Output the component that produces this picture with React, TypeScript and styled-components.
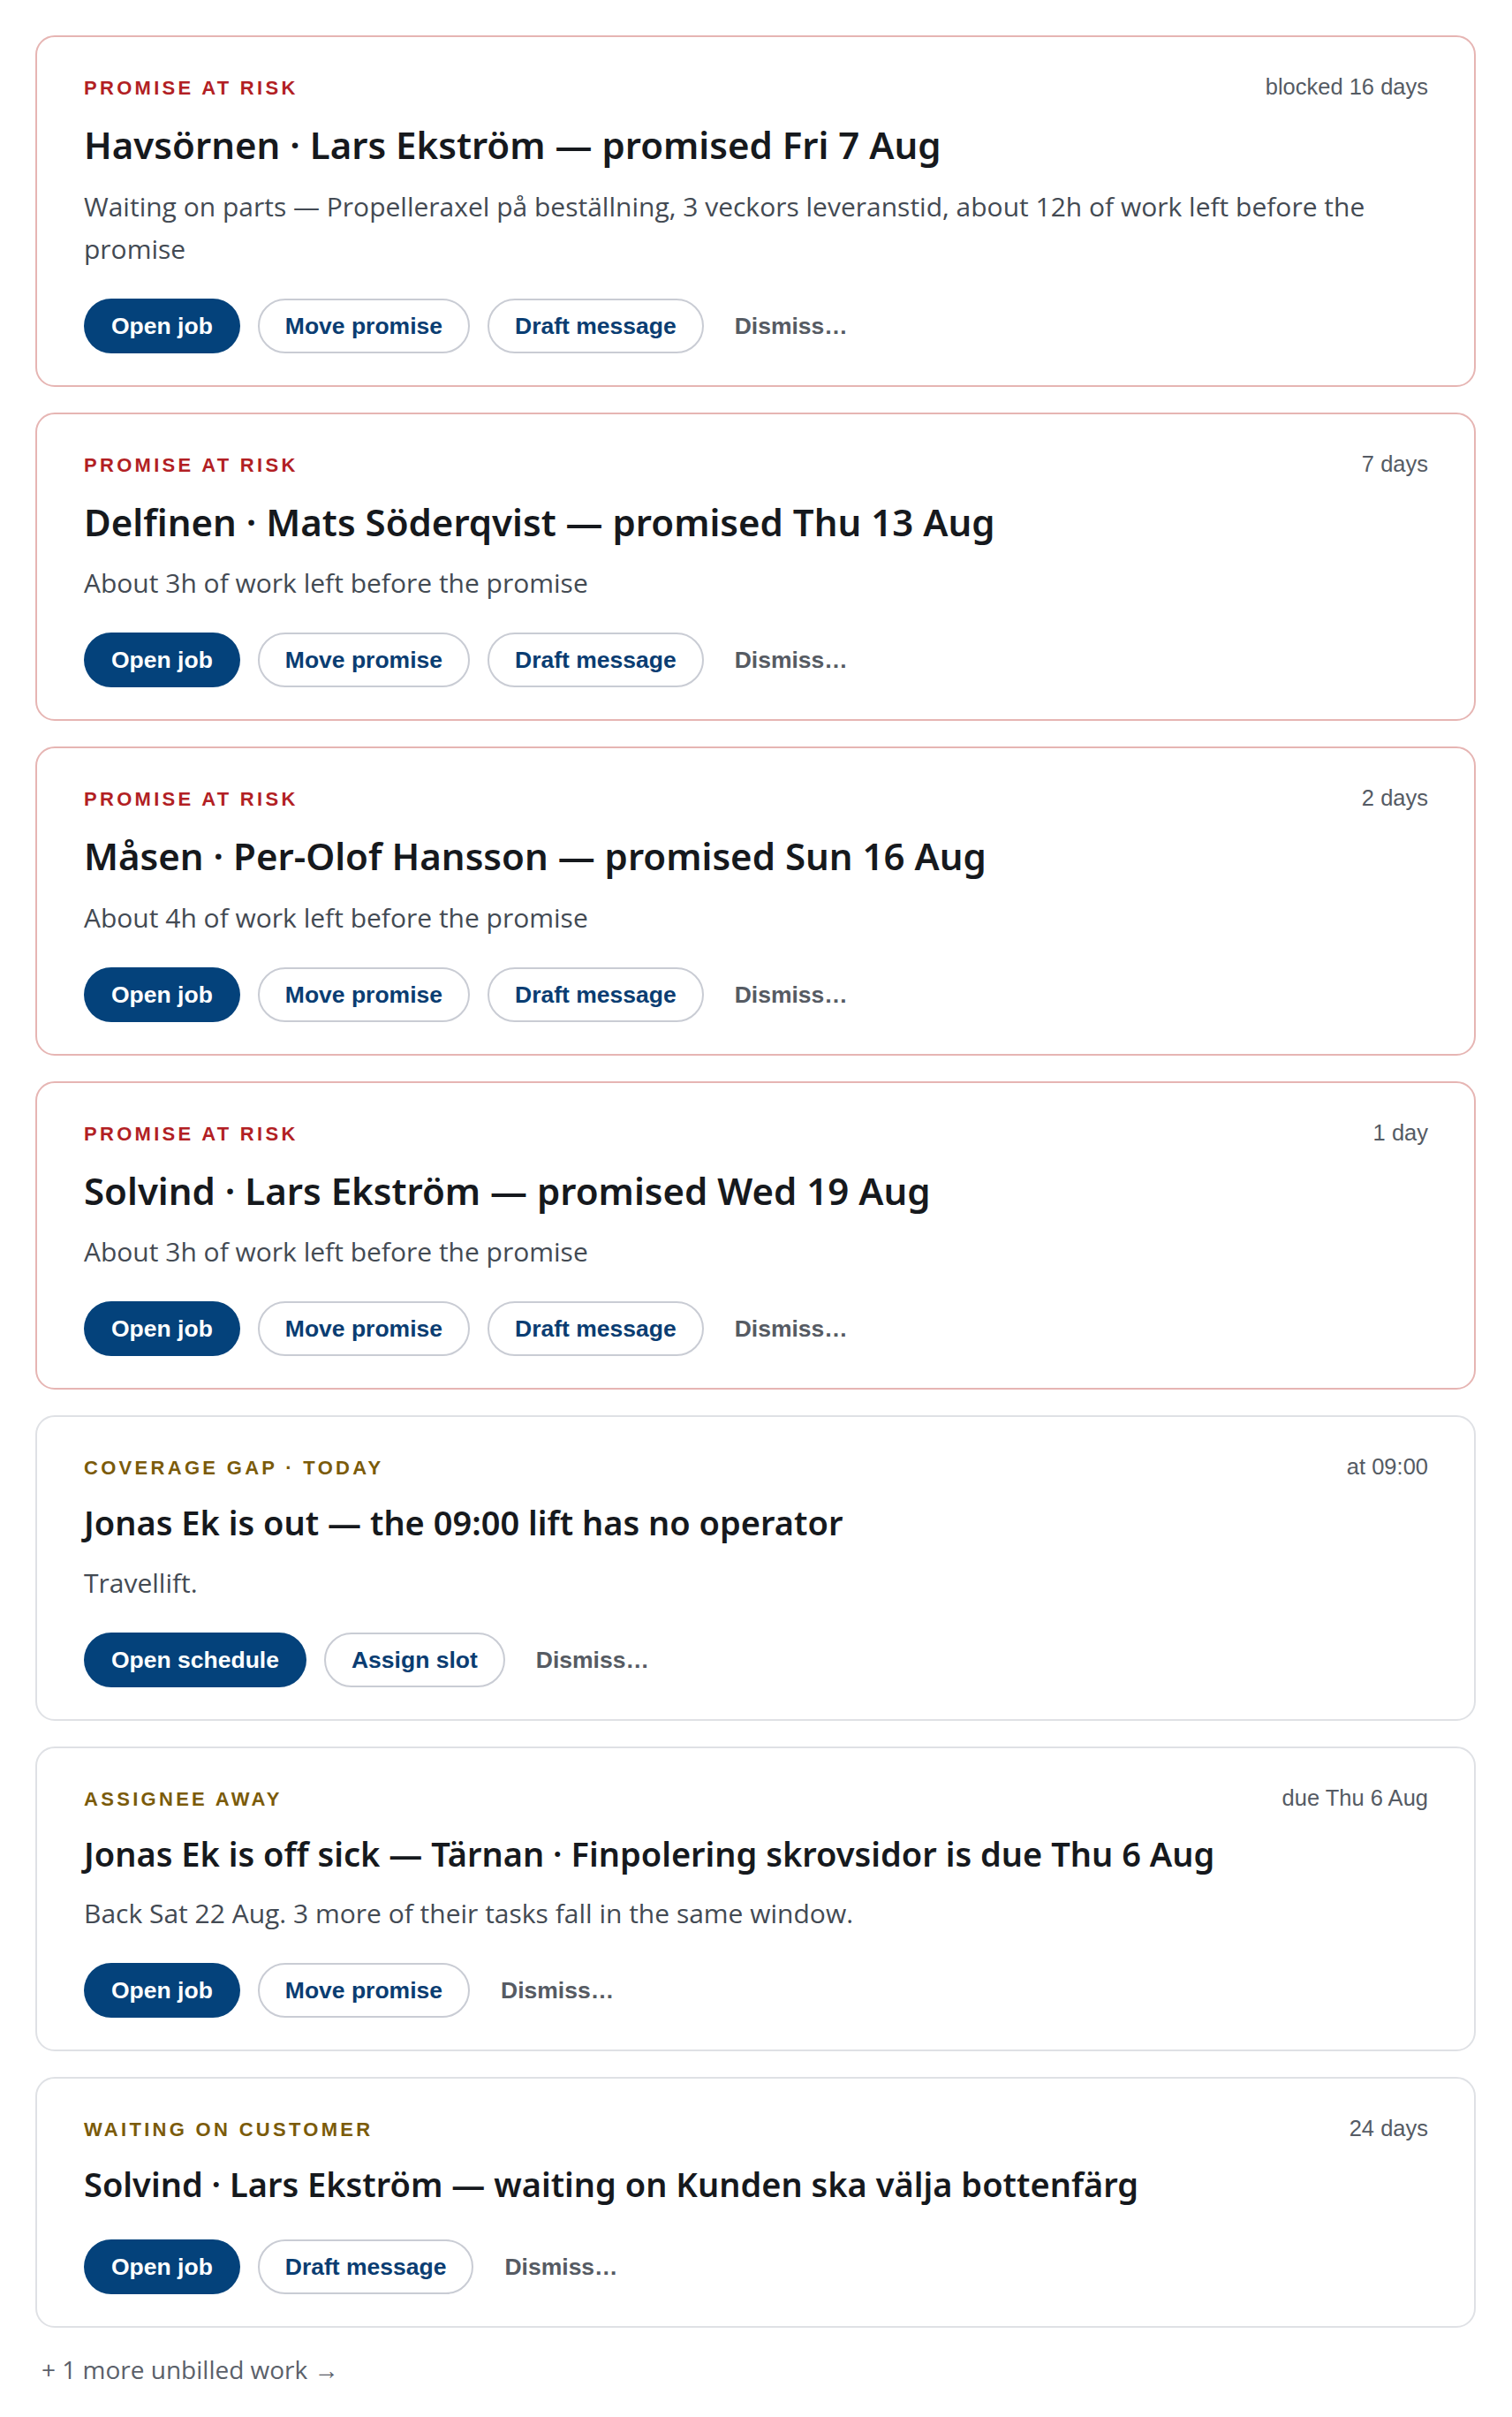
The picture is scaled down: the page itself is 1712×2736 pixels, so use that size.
import React from "react";
import styled, { createGlobalStyle, css } from "styled-components";

const GlobalStyle = createGlobalStyle`
  * { box-sizing: border-box; }
  body {
    margin: 0;
    background: #ffffff;
    font-family: "Noto Sans", "Open Sans", sans-serif;
  }
`;

type Tone = "risk" | "warn";

type Action = { label: string; kind: "primary" | "outline" | "ghost" };

type Alert = {
  tone: Tone;
  kind: string;
  meta: string;
  title: string;
  body?: string;
  actions: Action[];
};

const dismiss: Action = { label: "Dismiss…", kind: "ghost" };
const openJob: Action = { label: "Open job", kind: "primary" };
const movePromise: Action = { label: "Move promise", kind: "outline" };
const draftMessage: Action = { label: "Draft message", kind: "outline" };

const alerts: Alert[] = [
  {
    tone: "risk",
    kind: "Promise at risk",
    meta: "blocked 16 days",
    title: "Havsörnen · Lars Ekström — promised Fri 7 Aug",
    body: "Waiting on parts — Propelleraxel på beställning, 3 veckors leveranstid, about 12h of work left before the promise",
    actions: [openJob, movePromise, draftMessage, dismiss],
  },
  {
    tone: "risk",
    kind: "Promise at risk",
    meta: "7 days",
    title: "Delfinen · Mats Söderqvist — promised Thu 13 Aug",
    body: "About 3h of work left before the promise",
    actions: [openJob, movePromise, draftMessage, dismiss],
  },
  {
    tone: "risk",
    kind: "Promise at risk",
    meta: "2 days",
    title: "Måsen · Per-Olof Hansson — promised Sun 16 Aug",
    body: "About 4h of work left before the promise",
    actions: [openJob, movePromise, draftMessage, dismiss],
  },
  {
    tone: "risk",
    kind: "Promise at risk",
    meta: "1 day",
    title: "Solvind · Lars Ekström — promised Wed 19 Aug",
    body: "About 3h of work left before the promise",
    actions: [openJob, movePromise, draftMessage, dismiss],
  },
  {
    tone: "warn",
    kind: "Coverage gap · today",
    meta: "at 09:00",
    title: "Jonas Ek is out — the 09:00 lift has no operator",
    body: "Travellift.",
    actions: [
      { label: "Open schedule", kind: "primary" },
      { label: "Assign slot", kind: "outline" },
      dismiss,
    ],
  },
  {
    tone: "warn",
    kind: "Assignee away",
    meta: "due Thu 6 Aug",
    title: "Jonas Ek is off sick — Tärnan · Finpolering skrovsidor is due Thu 6 Aug",
    body: "Back Sat 22 Aug. 3 more of their tasks fall in the same window.",
    actions: [openJob, movePromise, dismiss],
  },
  {
    tone: "warn",
    kind: "Waiting on customer",
    meta: "24 days",
    title: "Solvind · Lars Ekström — waiting on Kunden ska välja bottenfärg",
    actions: [openJob, draftMessage, dismiss],
  },
];

const Page = styled.main`
  display: flex;
  flex-direction: column;
  gap: 29px;
  padding: 40px 41px 40px 40px;
`;

const Card = styled.section<{ $tone: Tone }>`
  border: 2px solid ${(p) => (p.$tone === "risk" ? "#e6b5b3" : "#dfe1e5")};
  border-radius: 22px;
  background: #ffffff;
  padding: 38px 52px 36px 53px;
`;

const Header = styled.div`
  display: flex;
  justify-content: space-between;
  align-items: baseline;
`;

const Kind = styled.span<{ $tone: Tone }>`
  font-family: "Liberation Sans", Arial, sans-serif;
  font-weight: 700;
  font-size: 22px;
  line-height: 33px;
  letter-spacing: 3.3px;
  text-transform: uppercase;
  color: ${(p) => (p.$tone === "risk" ? "#b21f24" : "#7b5b0a")};
`;

const Meta = styled.span`
  font-family: "Liberation Sans", Arial, sans-serif;
  font-size: 25.5px;
  line-height: 36px;
  color: #555b64;
`;

const Title = styled.h2<{ $tone: Tone }>`
  margin: 21px 0 0;
  font-weight: 600;
  color: #16191d;
  ${(p) =>
    p.$tone === "risk"
      ? css`
          font-size: 42px;
          line-height: 54.6px;
        `
      : css`
          font-size: 38px;
          line-height: 49.4px;
        `}
`;

const Body = styled.p<{ $tone: Tone }>`
  margin: ${(p) => (p.$tone === "risk" ? "18px" : "19px")} 0 0;
  font-family: "Open Sans", "Noto Sans", sans-serif;
  font-size: 30px;
  line-height: 48px;
  color: #434a53;
`;

const Actions = styled.div<{ $afterTitle: boolean }>`
  display: flex;
  align-items: center;
  gap: 20px;
  margin-top: ${(p) => (p.$afterTitle ? "37px" : "32px")};
`;

const Button = styled.button<{ $kind: Action["kind"] }>`
  font-family: "Liberation Sans", Arial, sans-serif;
  font-weight: 700;
  font-size: 26.5px;
  line-height: 30px;
  padding: 14px 29px;
  border-radius: 999px;
  border: 2px solid transparent;
  cursor: pointer;
  ${(p) =>
    p.$kind === "primary" &&
    css`
      background: #04427b;
      color: #ffffff;
    `}
  ${(p) =>
    p.$kind === "outline" &&
    css`
      background: #ffffff;
      border-color: #c9ccd4;
      color: #0a3d72;
    `}
  ${(p) =>
    p.$kind === "ghost" &&
    css`
      background: transparent;
      padding: 14px 13px;
      color: #565b63;
    `}
`;

const More = styled.button`
  align-self: flex-start;
  border: none;
  background: none;
  padding: 0 7px;
  font-family: "Open Sans", "Noto Sans", sans-serif;
  font-size: 28px;
  line-height: 37px;
  color: #5b616a;
  cursor: pointer;
`;

const AlertCard = ({ alert }: { alert: Alert }) => (
  <Card $tone={alert.tone}>
    <Header>
      <Kind $tone={alert.tone}>{alert.kind}</Kind>
      <Meta>{alert.meta}</Meta>
    </Header>
    <Title $tone={alert.tone}>{alert.title}</Title>
    {alert.body && <Body $tone={alert.tone}>{alert.body}</Body>}
    <Actions $afterTitle={!alert.body}>
      {alert.actions.map((a) => (
        <Button key={a.label} $kind={a.kind}>
          {a.label}
        </Button>
      ))}
    </Actions>
  </Card>
);

export default function App() {
  return (
    <>
      <GlobalStyle />
      <Page>
        {alerts.map((a, i) => (
          <AlertCard key={i} alert={a} />
        ))}
        <More>+ 1 more unbilled work →</More>
      </Page>
    </>
  );
}
